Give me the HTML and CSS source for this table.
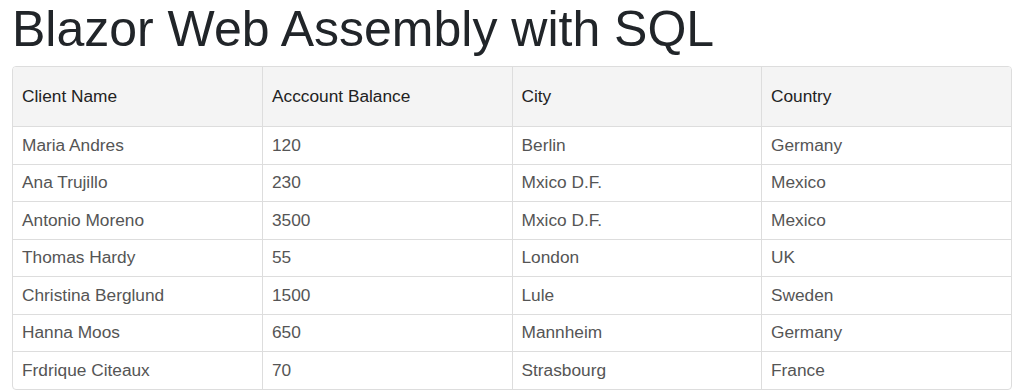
FILE: index.html
```html
<!DOCTYPE html>
<html lang="en">
<head>
<meta charset="utf-8">
<title>Blazor Web Assembly with SQL</title>
<link rel="stylesheet" href="styles.css">
</head>
<body>
<main class="page">
  <h1 class="title">Blazor Web Assembly with SQL</h1>
  <div class="table-wrap">
    <table class="grid">
      <thead>
        <tr><th>Client Name</th><th>Acccount Balance</th><th>City</th><th>Country</th></tr>
      </thead>
      <tbody>
        <tr><td>Maria Andres</td><td>120</td><td>Berlin</td><td>Germany</td></tr>
        <tr><td>Ana Trujillo</td><td>230</td><td>Mxico D.F.</td><td>Mexico</td></tr>
        <tr><td>Antonio Moreno</td><td>3500</td><td>Mxico D.F.</td><td>Mexico</td></tr>
        <tr><td>Thomas Hardy</td><td>55</td><td>London</td><td>UK</td></tr>
        <tr><td>Christina Berglund</td><td>1500</td><td>Lule</td><td>Sweden</td></tr>
        <tr><td>Hanna Moos</td><td>650</td><td>Mannheim</td><td>Germany</td></tr>
        <tr><td>Frdrique Citeaux</td><td>70</td><td>Strasbourg</td><td>France</td></tr>
      </tbody>
    </table>
  </div>
</main>
</body>
</html>
```

FILE: styles.css
```css
html, body {
  margin: 0;
  padding: 0;
  background: #fff;
}

.page {
  padding: 0 6px 0 12px;
  font-family: "Liberation Sans", Arial, sans-serif;
}

.title {
  margin: 0 0 8px 0;
  font-size: 50px;
  font-weight: 400;
  line-height: 58px;
  color: #212529;
}

.table-wrap {
  border: 1px solid #dddddd;
  border-radius: 4px;
  overflow: hidden;
}

.grid {
  width: 100%;
  border-collapse: collapse;
  table-layout: fixed;
  font-size: 17.3px;
}

.grid th,
.grid td {
  text-align: left;
  padding: 0 9px;
  border-left: 1px solid #dddddd;
  border-top: 1px solid #dddddd;
}

.grid th:first-child,
.grid td:first-child {
  border-left: none;
}

.grid thead th {
  border-top: none;
  height: 59px;
  background: #f4f4f4;
  font-weight: 400;
  color: #222222;
}

.grid tbody td {
  height: 36.5px;
  color: #555555;
}
```
